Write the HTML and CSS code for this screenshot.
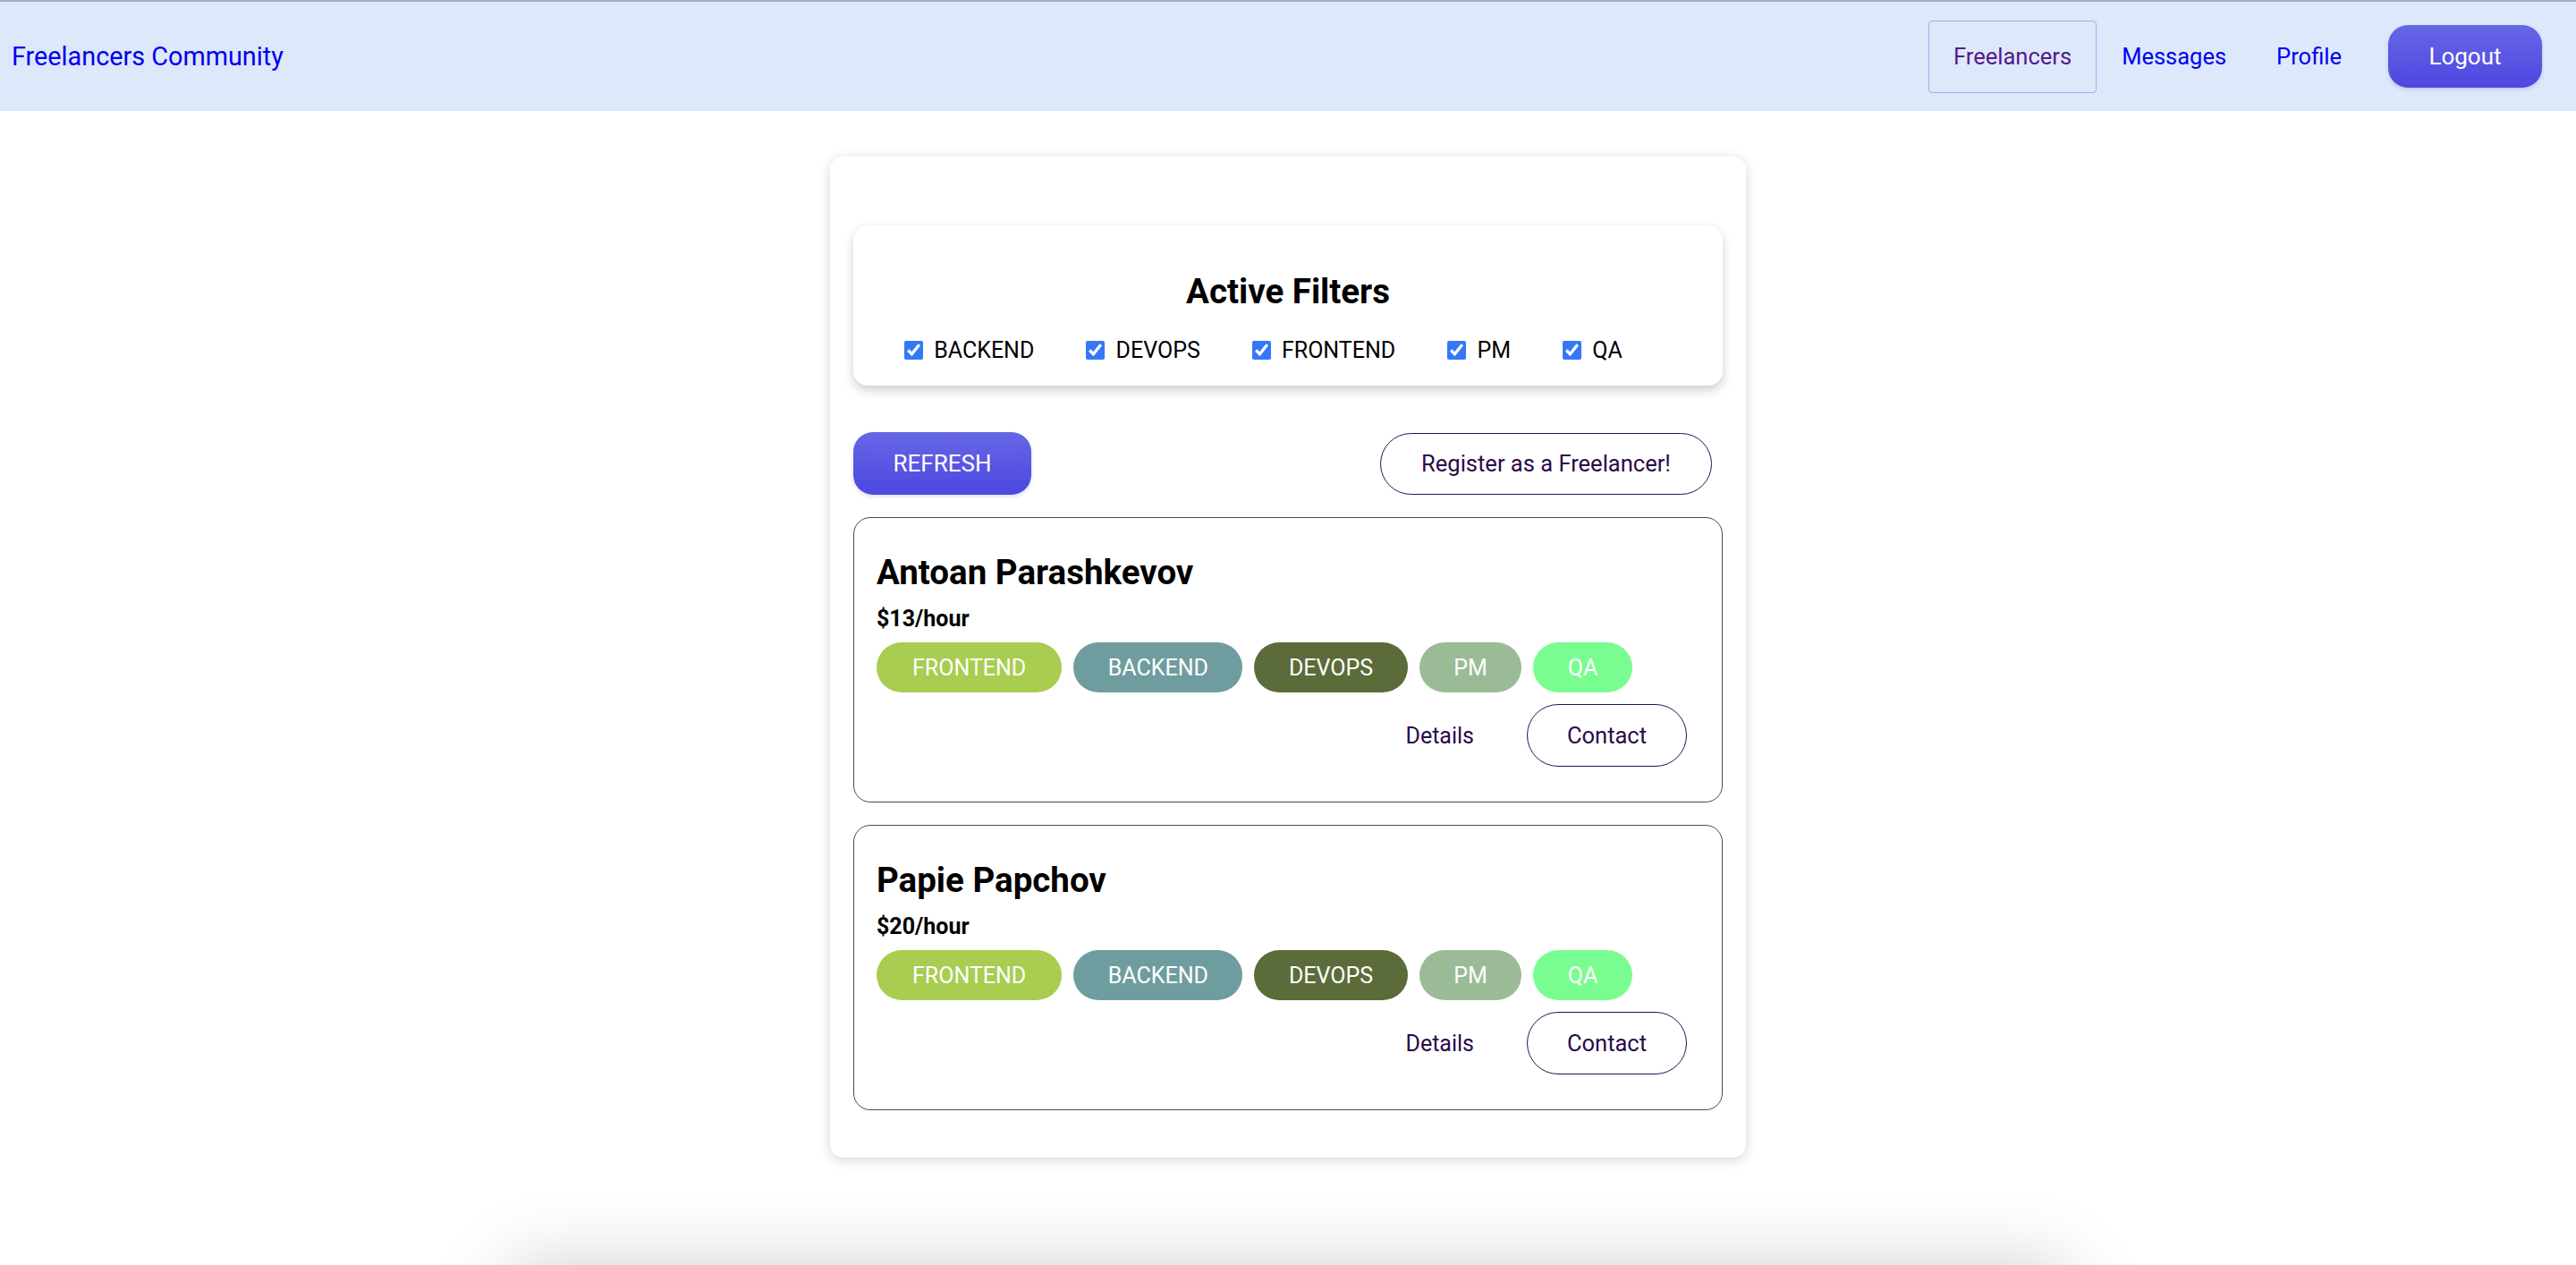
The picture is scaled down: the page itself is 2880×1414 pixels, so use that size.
FILE: index.html
```html
<!DOCTYPE html>
<html lang="en">
<head>
<meta charset="utf-8">
<title>Freelancers Community</title>
<link rel="stylesheet" href="styles.css">
</head>
<body>
<nav class="nav">
  <a class="brand" href="#">Freelancers Community</a>
  <div class="nav-links">
    <a class="nav-link active" href="#">Freelancers</a>
    <a class="nav-link" href="#">Messages</a>
    <a class="nav-link" href="#">Profile</a>
    <button class="btn-primary logout">Logout</button>
  </div>
</nav>

<main class="main">
  <section class="panel">
    <div class="filters">
      <h2 class="filters-title">Active Filters</h2>
      <div class="filter-row">
        <label class="filter"><input type="checkbox" checked> BACKEND</label>
        <label class="filter"><input type="checkbox" checked> DEVOPS</label>
        <label class="filter"><input type="checkbox" checked> FRONTEND</label>
        <label class="filter"><input type="checkbox" checked> PM</label>
        <label class="filter"><input type="checkbox" checked> QA</label>
      </div>
    </div>

    <div class="toolbar">
      <button class="btn-primary refresh">REFRESH</button>
      <button class="btn-outline register">Register as a Freelancer!</button>
    </div>

    <div class="list">
      <article class="fl-card">
        <h3 class="fl-name">Antoan Parashkevov</h3>
        <p class="fl-rate">$13/hour</p>
        <div class="tags">
          <span class="tag tag-frontend">FRONTEND</span>
          <span class="tag tag-backend">BACKEND</span>
          <span class="tag tag-devops">DEVOPS</span>
          <span class="tag tag-pm">PM</span>
          <span class="tag tag-qa">QA</span>
        </div>
        <div class="actions">
          <a class="details" href="#">Details</a>
          <button class="btn-outline contact">Contact</button>
        </div>
      </article>

      <article class="fl-card">
        <h3 class="fl-name">Papie Papchov</h3>
        <p class="fl-rate">$20/hour</p>
        <div class="tags">
          <span class="tag tag-frontend">FRONTEND</span>
          <span class="tag tag-backend">BACKEND</span>
          <span class="tag tag-devops">DEVOPS</span>
          <span class="tag tag-pm">PM</span>
          <span class="tag tag-qa">QA</span>
        </div>
        <div class="actions">
          <a class="details" href="#">Details</a>
          <button class="btn-outline contact">Contact</button>
        </div>
      </article>
    </div>
  </section>
</main>

<footer class="footer"></footer>
</body>
</html>
```

FILE: styles.css
```css
* { box-sizing: border-box; }

html, body {
  margin: 0;
  padding: 0;
  background: #ffffff;
  font-family: Roboto, "Liberation Sans", Arial, sans-serif;
  overflow: hidden;
}

.nav {
  height: 124px;
  border-top: 2px solid #a9acc6;
  background: #dde8fb;
  display: flex;
  align-items: center;
  justify-content: space-between;
  padding: 0 38px 0 13px;
}

.brand {
  color: #0000ee;
  text-decoration: none;
  font-size: 28.8px;
}

.nav-links {
  display: flex;
  align-items: center;
}

.nav-link {
  height: 81px;
  display: flex;
  align-items: center;
  padding: 0 27px;
  font-size: 25.5px;
  color: #0000ee;
  text-decoration: none;
  border: 1px solid transparent;
  border-radius: 4px;
}

.nav-link.active {
  color: #551a8b;
  border-color: #a6a8f2;
}

.btn-primary {
  border: none;
  color: #ffffff;
  font-family: inherit;
  font-size: 26px;
  background: linear-gradient(180deg, #6667e6 0%, #4d47e0 100%);
  box-shadow: 0 2px 4px rgba(60, 50, 160, 0.18);
  cursor: pointer;
}

.logout {
  margin-left: 24px;
  width: 172px;
  height: 70px;
  border-radius: 22px;
}

.main {
  padding-top: 51px;
}

.panel {
  width: 1024px;
  margin: 0 auto;
  background: #ffffff;
  border-radius: 15px;
  box-shadow: 0 3px 14px rgba(0, 0, 0, 0.16);
  padding: 77px 26px 53px 26px;
}

.filters {
  height: 179px;
  border-radius: 16px;
  background: #ffffff;
  box-shadow: 0 5px 12px rgba(0, 0, 0, 0.2);
  padding-top: 52px;
  display: flex;
  flex-direction: column;
  align-items: center;
}

.filters-title {
  margin: 0;
  font-size: 38.5px;
  line-height: 44px;
  font-weight: 700;
  color: #000000;
}

.filter-row {
  align-self: stretch;
  margin-top: 29px;
  display: flex;
  justify-content: flex-start;
  align-items: center;
  padding-left: 50px;
}

.filter {
  display: flex;
  align-items: center;
  font-size: 25px;
  line-height: 29px;
  color: #000000;
  margin-right: 51px;
  white-space: pre;
}

.filter input {
  width: 21px;
  height: 21px;
  margin: 0 6px 0 7px;
  accent-color: #3478f6;
}

.toolbar {
  margin-top: 52px;
  display: flex;
  justify-content: space-between;
  align-items: center;
  padding-right: 12px;
}

.refresh {
  width: 199px;
  height: 70px;
  border-radius: 22px;
}

.btn-outline {
  background: #ffffff;
  border: 1.5px solid #2f0f52;
  color: #2a0a4a;
  font-family: inherit;
  font-size: 25.5px;
  border-radius: 35px;
  cursor: pointer;
}

.register {
  width: 371px;
  height: 69px;
}

.list {
  margin-top: 25px;
  display: flex;
  flex-direction: column;
  gap: 25px;
}

.fl-card {
  border: 1.5px solid #4a4a4a;
  border-radius: 19px;
  padding: 39px 39px 39px 25px;
}

.fl-name {
  margin: 0;
  font-size: 38.5px;
  line-height: 44px;
  font-weight: 700;
  color: #000000;
}

.fl-rate {
  margin: 16px 0 0 0;
  font-size: 25px;
  line-height: 28px;
  font-weight: 700;
  color: #000000;
}

.tags {
  margin-top: 12px;
  display: flex;
  gap: 13px;
}

.tag {
  height: 56px;
  display: flex;
  align-items: center;
  padding: 0 38.5px;
  border-radius: 28px;
  color: #ffffff;
  font-size: 25px;
}

.tag-frontend { background: #a8cd50; padding: 0 40px; }
.tag-backend { background: #6f9d9f; }
.tag-devops { background: #5b6b39; }
.tag-pm { background: #9bbb97; }
.tag-qa { background: #7afd90; }

.actions {
  margin-top: 13px;
  display: flex;
  justify-content: flex-end;
  align-items: center;
  gap: 59px;
}

.details {
  color: #2a0a4a;
  text-decoration: none;
  font-size: 25px;
}

.contact {
  width: 179px;
  height: 70px;
}

.footer {
  width: 1740px;
  height: 300px;
  margin: 122px auto 0 auto;
  background: #ffffff;
  box-shadow: 0 0 80px rgba(0, 0, 0, 0.2);
}
```
